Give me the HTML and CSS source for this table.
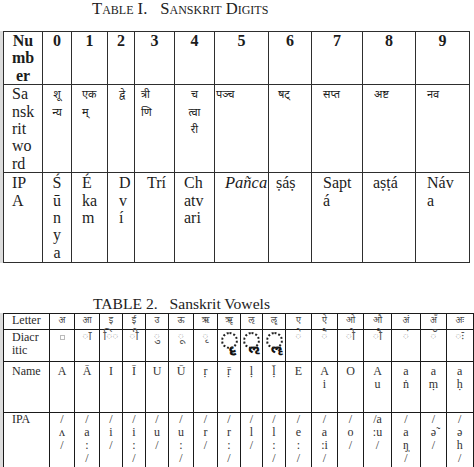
FILE: index.html
```html
<!DOCTYPE html>
<html lang="en">
<head>
<meta charset="utf-8">
<title>Sanskrit tables</title>
<link rel="stylesheet" href="styles.css">
</head>
<body>
<div class="page">
  <p class="title1">Table I.<span class="gap"></span>Sanskrit Digits</p>
  <table class="t1">
    <colgroup>
      <col class="a"><col class="b"><col class="c"><col class="d"><col class="e"><col class="f"><col class="g"><col class="h"><col class="i"><col class="j"><col class="k">
    </colgroup>
    <tr class="r1">
      <td class="ctr">Nu<br>mb<br>er</td>
      <td class="ctr">0</td><td class="ctr">1</td><td class="ctr">2</td><td class="ctr">3</td><td class="ctr">4</td>
      <td class="ctr">5</td><td class="ctr">6</td><td class="ctr">7</td><td class="ctr">8</td><td class="ctr">9</td>
    </tr>
    <tr class="r2">
      <td>Sa<br>nsk<br>rit<br>wo<br>rd</td>
      <td class="ctr dev">शू<br>न्य</td>
      <td class="dev p10">एक<br>म्</td>
      <td class="dev p11">द्वे</td>
      <td class="dev p6">त्री<br>णि</td>
      <td class="ctr dev">च<br>त्वा<br>री</td>
      <td class="dev p1">पञ्च</td>
      <td class="dev p9">षट्</td>
      <td class="dev p11">सप्त</td>
      <td class="dev p11">अष्ट</td>
      <td class="dev p11">नव</td>
    </tr>
    <tr class="r3">
      <td>IP<br>A</td>
      <td class="ctr">Ś<br>ū<br>n<br>y<br>a</td>
      <td class="p10">É<br>ka<br>m</td>
      <td class="p11">D<br>v<br>í</td>
      <td class="p12">Trí</td>
      <td class="p9">Ch<br>atv<br>ari</td>
      <td class="p10 it">Pañca</td>
      <td class="p7">ṣáṣ</td>
      <td class="p11">Sapt<br>á</td>
      <td class="p10">aṣṭá</td>
      <td class="p11">Náv<br>a</td>
    </tr>
  </table>

  <p class="title2">TABLE 2.<span class="gap2"></span>Sanskrit Vowels</p>
  <table class="t2">
    <colgroup>
      <col class="l"><col class="w25"><col class="w25"><col class="w23"><col class="w23"><col class="w23"><col class="w25"><col class="w24"><col class="w23"><col class="w22"><col class="w23"><col class="w26"><col class="w26"><col class="w26"><col class="w28"><col class="w29"><col class="w26"><col class="w27">
    </colgroup>
    <tr class="s1">
      <td class="lab">Letter</td>
      <td class="dv">अ</td><td class="dv">आ</td><td class="dv">इ</td><td class="dv">ई</td><td class="dv">उ</td><td class="dv">ऊ</td><td class="dv">ऋ</td><td class="dv">ॠ</td><td class="dv">ऌ</td><td class="dv">ॡ</td><td class="dv">ए</td><td class="dv">ऐ</td><td class="dv">ओ</td><td class="dv">औ</td><td class="dv">अं</td><td class="dv">अँ</td><td class="dv">अः</td>
    </tr>
    <tr class="s2">
      <td class="lab">Diacr<br>itic</td>
      <td class="dv"><span class="box"></span></td>
      <td class="dv sm">◌ा</td><td class="dv sm">ि◌</td><td class="dv sm">◌ी</td><td class="dv sm">◌ु</td><td class="dv sm">◌ू</td><td class="dv sm">◌ृ</td>
      <td class="dv big"><span class="ring">&nbsp;ॄ</span></td><td class="dv big"><span class="ring">&nbsp;ॢ</span></td><td class="dv big"><span class="ring">&nbsp;ॣ</span></td>
      <td class="dv sm">◌े</td><td class="dv sm">◌ै</td><td class="dv sm">◌ो</td><td class="dv sm">◌ौ</td><td class="dv sm">◌ं</td><td class="dv sm">◌ँ</td><td class="dv sm">◌ः</td>
    </tr>
    <tr class="s3">
      <td class="lab">Name</td>
      <td>A</td><td>Ā</td><td>I</td><td>Ī</td><td>U</td><td>Ū</td><td>ṛ</td><td>ṝ</td><td>ḷ</td><td>ḹ</td><td>E</td><td>A<br>i</td><td>O</td><td>A<br>u</td><td>a<br>ṅ</td><td>a<br>ṃ</td><td>a<br>ḥ</td>
    </tr>
    <tr class="s4">
      <td class="lab">IPA</td>
      <td>/<br>ʌ<br>/</td>
      <td>/<br>a<br>:<br>/</td>
      <td>/<br>i<br>/</td>
      <td>/<br>i<br>:<br>/</td>
      <td>/<br>u<br>/</td>
      <td>/<br>u<br>:<br>/</td>
      <td>/<br>r<br>/</td>
      <td>/<br>r<br>:<br>/</td>
      <td>/<br>l<br>/</td>
      <td>/<br>l<br>:<br>/</td>
      <td>/<br>e<br>:<br>/</td>
      <td>/<br>a<br>:i<br>/</td>
      <td>/<br>o<br>/</td>
      <td>/a<br>:u<br>/</td>
      <td>/<br>a<br>ŋ̩<br>/</td>
      <td>/<br>ə̃<br>/</td>
      <td>/<br>ə<br>h<br>/</td>
    </tr>
  </table>
</div>
</body>
</html>
```

FILE: styles.css
```css
* { box-sizing: border-box; }

html, body {
  margin: 0;
  padding: 0;
  background: #ffffff;
}

body {
  font-family: "Liberation Serif", "Times New Roman", serif;
  color: #1c1c1c;
}

.page {
  width: 474px;
  height: 467px;
  overflow: hidden;
}

.title1 {
  margin: 0 0 13px 0;
  padding-left: 92px;
  font-size: 16.6px;
  line-height: 18px;
  font-variant: small-caps;
  color: #222;
}

.gap { display: inline-block; width: 13px; }

.title2 {
  margin: 33px 0 1px 0;
  padding-left: 93px;
  font-size: 15.6px;
  line-height: 16px;
  color: #222;
}

.gap2 { display: inline-block; width: 12px; }

/* Table 1 */
.t1 {
  border-collapse: collapse;
  table-layout: fixed;
  width: 466px;
  margin-left: 3px;
  box-shadow: -3px 0 0 #dcdcdc;
}

.t1 col.a { width: 39px; }
.t1 col.b { width: 29px; }
.t1 col.c { width: 36px; }
.t1 col.d { width: 27px; }
.t1 col.e { width: 40px; }
.t1 col.f { width: 40px; }
.t1 col.g { width: 54px; }
.t1 col.h { width: 43px; }
.t1 col.i { width: 51px; }
.t1 col.j { width: 53px; }
.t1 col.k { width: 54px; }

.t1 td {
  border: 1px solid #2e2e2e;
  vertical-align: top;
  padding: 0 0 0 8px;
  font-size: 16px;
  line-height: 17.4px;
  white-space: nowrap;
  overflow: visible;
}

.t1 .r1 { height: 53px; }
.t1 .r1 td { font-weight: bold; }
.t1 .r2 { height: 88px; }
.t1 .r3 { height: 90px; }
.t1 .r3 td { padding-top: 1px; }

.t1 td.ctr { text-align: center; padding-left: 0; }
.t1 td.p1 { padding-left: 1px; }
.t1 td.p6 { padding-left: 6px; }
.t1 td.p7 { padding-left: 7px; }
.t1 td.p9 { padding-left: 9px; }
.t1 td.p10 { padding-left: 10px; }
.t1 td.p11 { padding-left: 11px; }
.t1 td.p12 { padding-left: 12px; }

.t1 td.dev {
  font-family: "Noto Sans Devanagari", "Noto Serif Devanagari", "Lohit Devanagari", "FreeSerif", "Mangal", sans-serif;
  font-size: 11px;
  padding-top: 2px;
}

.t1 td.it { font-style: italic; font-size: 16.5px; }

/* Table 2 */
.t2 {
  border-collapse: collapse;
  table-layout: fixed;
  width: 471px;
  margin-left: 3px;
  font-size: 12px;
  line-height: 13px;
  color: #333;
  box-shadow: -3px 0 0 #dcdcdc;
}

.t2 col.l { width: 46px; }
.t2 col.w22 { width: 22px; }
.t2 col.w23 { width: 23px; }
.t2 col.w24 { width: 24px; }
.t2 col.w25 { width: 25px; }
.t2 col.w26 { width: 26px; }
.t2 col.w27 { width: 27px; }
.t2 col.w28 { width: 28px; }
.t2 col.w29 { width: 29px; }

.t2 td {
  border: 1px solid #1a1a1a;
  text-align: center;
  vertical-align: top;
  padding: 0;
  white-space: nowrap;
}

.t2 td:last-child { border-right-width: 2px; }

.t2 td.lab {
  text-align: left;
  padding-left: 8px;
  color: #2a2a2a;
}

.t2 .s1 { height: 16px; }
.t2 .s2 { height: 32px; }
.t2 .s2 td { padding-top: 1px; }
.t2 .s3 { height: 51px; }
.t2 .s3 td { padding-top: 3px; }
.t2 .s4 { height: 70px; }

.t2 td.dv {
  font-family: "Noto Sans Devanagari", "Noto Serif Devanagari", "Lohit Devanagari", "FreeSerif", "Mangal", sans-serif;
  font-size: 9px;
  line-height: 14px;
  color: #444;
}

.t2 td.sm {
  font-size: 12px;
  line-height: 13px;
  color: #555;
}

.t2 .s2 td.big {
  font-size: 20px;
  font-weight: bold;
  line-height: 20px;
  padding-top: 2px;
  color: #111;
}

.ring {
  position: relative;
  display: inline-block;
  padding-left: 7px;
}

.ring::before {
  content: "";
  position: absolute;
  left: -2px;
  top: 0px;
  width: 13px;
  height: 13px;
  border: 2px dotted #222;
  border-radius: 50%;
}

.box {
  display: inline-block;
  width: 5px;
  height: 5px;
  border: 1px solid #bbb;
  vertical-align: middle;
}
```
